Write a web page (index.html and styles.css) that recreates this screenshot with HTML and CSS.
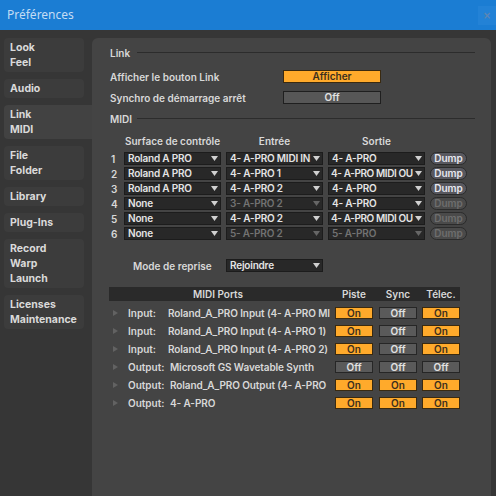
FILE: index.html
```html
<!DOCTYPE html>
<html>
<head>
<meta charset="utf-8">
<title>Préférences</title>
<link rel="stylesheet" href="styles.css">
</head>
<body>
<div class="titlebar"><span class="title">Préférences</span><span class="close">×</span></div>
<div class="main">
  <nav class="sidebar">
    <div class="tab">Look<br>Feel</div>
    <div class="tab">Audio</div>
    <div class="tab sel">Link<br>MIDI</div>
    <div class="tab">File<br>Folder</div>
    <div class="tab">Library</div>
    <div class="tab">Plug-Ins</div>
    <div class="tab">Record<br>Warp<br>Launch</div>
    <div class="tab">Licenses<br>Maintenance</div>
  </nav>
  <section class="panel">
    <div class="sec-head"><span class="sec-label">Link</span><span class="rule"></span></div>
    <div class="opt-row first"><span class="opt-label">Afficher le bouton Link</span><span class="wbtn on">Afficher</span></div>
    <div class="opt-row"><span class="opt-label">Synchro de démarrage arrêt</span><span class="wbtn off">Off</span></div>
    <div class="sec-head midi"><span class="sec-label">MIDI</span><span class="rule"></span></div>

    <div class="col-heads"><span class="num"></span><span class="ch">Surface de contrôle</span><span class="ch">Entrée</span><span class="ch">Sortie</span></div>

    <div class="mgrid">
      <div class="mrow"><span class="num">1</span>
        <div class="dd"><span class="txt">Roland A PRO</span><svg class="arr" viewBox="0 0 7 5"><polygon points="0,0 7,0 3.5,5"/></svg></div>
        <div class="dd"><span class="txt">4- A-PRO MIDI IN</span><svg class="arr" viewBox="0 0 7 5"><polygon points="0,0 7,0 3.5,5"/></svg></div>
        <div class="dd"><span class="txt">4- A-PRO</span><svg class="arr" viewBox="0 0 7 5"><polygon points="0,0 7,0 3.5,5"/></svg></div>
        <span class="dump">Dump</span></div>
      <div class="mrow"><span class="num">2</span>
        <div class="dd"><span class="txt">Roland A PRO</span><svg class="arr" viewBox="0 0 7 5"><polygon points="0,0 7,0 3.5,5"/></svg></div>
        <div class="dd"><span class="txt">4- A-PRO 1</span><svg class="arr" viewBox="0 0 7 5"><polygon points="0,0 7,0 3.5,5"/></svg></div>
        <div class="dd tight"><span class="txt">4- A-PRO MIDI OU</span><svg class="arr" viewBox="0 0 7 5"><polygon points="0,0 7,0 3.5,5"/></svg></div>
        <span class="dump">Dump</span></div>
      <div class="mrow"><span class="num">3</span>
        <div class="dd"><span class="txt">Roland A PRO</span><svg class="arr" viewBox="0 0 7 5"><polygon points="0,0 7,0 3.5,5"/></svg></div>
        <div class="dd"><span class="txt">4- A-PRO 2</span><svg class="arr" viewBox="0 0 7 5"><polygon points="0,0 7,0 3.5,5"/></svg></div>
        <div class="dd"><span class="txt">4- A-PRO</span><svg class="arr" viewBox="0 0 7 5"><polygon points="0,0 7,0 3.5,5"/></svg></div>
        <span class="dump">Dump</span></div>
      <div class="mrow"><span class="num">4</span>
        <div class="dd"><span class="txt">None</span><svg class="arr" viewBox="0 0 7 5"><polygon points="0,0 7,0 3.5,5"/></svg></div>
        <div class="dd dis"><span class="txt">3- A-PRO 2</span><svg class="arr" viewBox="0 0 7 5"><polygon points="0,0 7,0 3.5,5"/></svg></div>
        <div class="dd"><span class="txt">4- A-PRO</span><svg class="arr" viewBox="0 0 7 5"><polygon points="0,0 7,0 3.5,5"/></svg></div>
        <span class="dump dis">Dump</span></div>
      <div class="mrow"><span class="num">5</span>
        <div class="dd"><span class="txt">None</span><svg class="arr" viewBox="0 0 7 5"><polygon points="0,0 7,0 3.5,5"/></svg></div>
        <div class="dd"><span class="txt">4- A-PRO 2</span><svg class="arr" viewBox="0 0 7 5"><polygon points="0,0 7,0 3.5,5"/></svg></div>
        <div class="dd tight"><span class="txt">4- A-PRO MIDI OU</span><svg class="arr" viewBox="0 0 7 5"><polygon points="0,0 7,0 3.5,5"/></svg></div>
        <span class="dump dis">Dump</span></div>
      <div class="mrow"><span class="num">6</span>
        <div class="dd"><span class="txt">None</span><svg class="arr" viewBox="0 0 7 5"><polygon points="0,0 7,0 3.5,5"/></svg></div>
        <div class="dd dis"><span class="txt">5- A-PRO 2</span><svg class="arr" viewBox="0 0 7 5"><polygon points="0,0 7,0 3.5,5"/></svg></div>
        <div class="dd dis"><span class="txt">5- A-PRO</span><svg class="arr" viewBox="0 0 7 5"><polygon points="0,0 7,0 3.5,5"/></svg></div>
        <span class="dump dis">Dump</span></div>
    </div>

    <div class="mode-row"><span class="mode-label">Mode de reprise</span>
      <div class="dd"><span class="txt">Rejoindre</span><svg class="arr" viewBox="0 0 7 5"><polygon points="0,0 7,0 3.5,5"/></svg></div></div>

    <div class="ports">
      <div class="th"><span class="th-name">MIDI Ports</span><span class="th-col">Piste</span><span class="th-col c2">Sync</span><span class="th-col c3">Télec.</span></div>
      <div class="prow"><span class="tri"></span><span class="plabel">Input:</span><span class="pname">Roland_A_PRO Input (4- A-PRO MI</span><span class="tg on">On</span><span class="tg off c2">Off</span><span class="tg on c3">On</span></div>
      <div class="prow"><span class="tri"></span><span class="plabel">Input:</span><span class="pname">Roland_A_PRO Input (4- A-PRO 1)</span><span class="tg on">On</span><span class="tg off c2">Off</span><span class="tg on c3">On</span></div>
      <div class="prow"><span class="tri"></span><span class="plabel">Input:</span><span class="pname">Roland_A_PRO Input (4- A-PRO 2)</span><span class="tg on">On</span><span class="tg off c2">Off</span><span class="tg on c3">On</span></div>
      <div class="prow"><span class="tri"></span><span class="plabel out">Output:</span><span class="pname out">Microsoft GS Wavetable Synth</span><span class="tg off">Off</span><span class="tg off c2">Off</span><span class="tg off c3">Off</span></div>
      <div class="prow"><span class="tri"></span><span class="plabel out">Output:</span><span class="pname out">Roland_A_PRO Output (4- A-PRO</span><span class="tg on">On</span><span class="tg on c2">On</span><span class="tg on c3">On</span></div>
      <div class="prow"><span class="tri"></span><span class="plabel out">Output:</span><span class="pname out">4- A-PRO</span><span class="tg on">On</span><span class="tg on c2">On</span><span class="tg on c3">On</span></div>
    </div>
  </section>
</div>
</body>
</html>
```
FILE: styles.css
```css
html, body {
  margin: 0;
  padding: 0;
}
body {
  width: 496px;
  height: 496px;
  overflow: hidden;
  background: #363636;
  font-family: Inter, "Noto Sans", "DejaVu Sans", sans-serif;
  font-size: 10px;
  font-weight: 600;
  color: #d8d8d8;
}

.titlebar {
  height: 30px;
  background: #1b7dd3;
  display: flex;
  justify-content: space-between;
  align-items: flex-start;
}
.title {
  margin: 7px 0 0 7px;
  font-family: "Noto Sans", sans-serif;
  font-weight: 400;
  font-size: 12px;
  line-height: 16px;
  color: #c3dcf4;
}
.close {
  margin-top: 6px;
  width: 18px;
  height: 19px;
  background: #2382d6;
  color: #5e86b3;
  font-family: "DejaVu Sans", sans-serif;
  font-size: 10px;
  line-height: 19px;
  text-align: center;
}

.main {
  display: flex;
  height: 466px;
}

.sidebar {
  width: 92px;
  flex: none;
  box-sizing: border-box;
  padding: 8px 0 0 4px;
  display: flex;
  flex-direction: column;
  gap: 7px;
}
.tab {
  width: 80px;
  box-sizing: border-box;
  padding: 2px 0 2px 6px;
  background: #3c3c3c;
  border-radius: 4px;
  line-height: 15px;
  font-size: 10.5px;
  font-weight: 700;
  color: #dadada;
}
.tab.sel {
  width: 88px;
  background: #424242;
  border-radius: 4px 0 0 4px;
}

.panel {
  flex: none;
  width: 399px;
  margin-top: 8px;
  box-sizing: border-box;
  padding: 8px 16px 0 18px;
  background: #444444;
  border-radius: 6px 6px 0 0;
}

.sec-head {
  display: flex;
  align-items: center;
  height: 14px;
  line-height: 14px;
}
.sec-head.midi {
  margin-top: 8px;
}
.sec-label {
  width: 27px;
  flex: none;
}
.rule {
  flex: 1;
  height: 1px;
  background: #2c2c2c;
  margin-top: -1px;
}

.opt-row {
  display: flex;
  align-items: center;
  height: 13px;
  margin-top: 8px;
}
.opt-row.first {
  margin-top: 10px;
}
.opt-label {
  width: 173px;
  flex: none;
}
.wbtn {
  width: 98px;
  height: 13px;
  box-sizing: border-box;
  text-align: center;
  line-height: 11px;
  border: 1px solid #222;
}
.wbtn.on {
  background: #ffaa2b;
  border-color: #3a2a10;
  color: #3b2f1e;
}
.wbtn.off {
  background: #575757;
  border-color: #1f1f1f;
  color: #e2e2e2;
}

.col-heads {
  display: flex;
  height: 14px;
  line-height: 14px;
  margin-top: 8px;
}
.num {
  width: 14px;
  flex: none;
}
.ch {
  width: 97px;
  margin-right: 5px;
  text-align: center;
  white-space: nowrap;
}

.mgrid {
  margin-top: 4px;
  display: flex;
  flex-direction: column;
  gap: 2px;
}
.mrow {
  display: flex;
  align-items: center;
  height: 13px;
}
.mrow .num {
  padding-left: 1px;
  box-sizing: border-box;
}
.dd {
  width: 97px;
  height: 13px;
  flex: none;
  margin-right: 5px;
  box-sizing: border-box;
  background: #282828;
  border: 1px solid #1c1c1c;
  display: flex;
  align-items: center;
  padding: 0 2px 0 3px;
  color: #e4e4e4;
  line-height: 11px;
  letter-spacing: -0.2px;
}
.dd.tight {
  padding-left: 2px;
  letter-spacing: -0.4px;
}
.dd .txt {
  flex: 1;
  overflow: hidden;
  white-space: nowrap;
}
.arr {
  width: 7px;
  height: 5px;
  flex: none;
  fill: #d0d0d0;
}
.dd.dis .txt {
  color: #727272;
}
.dd.dis .arr {
  fill: #666666;
}
.dump {
  width: 37px;
  height: 13px;
  box-sizing: border-box;
  border-radius: 7px;
  border: 1px solid #2b2b2b;
  background: #58585f;
  color: #e8e8f0;
  text-align: center;
  line-height: 11px;
}
.dump.dis {
  background: #4a4a4a;
  color: #6e6e6e;
}

.mode-row {
  display: flex;
  align-items: center;
  height: 13px;
  margin-top: 19px;
}
.mode-label {
  width: 93px;
  margin-left: 23px;
  flex: none;
}

.ports {
  margin-top: 15px;
  margin-left: -1px;
  width: 351px;
}
.th {
  display: flex;
  align-items: center;
  height: 14px;
  line-height: 14px;
  background: #2a2a2a;
}
.th-name {
  width: 218px;
  margin-right: 8px;
  text-align: center;
}
.th-col {
  width: 38px;
  text-align: center;
}
.c2 {
  margin-left: 6px;
}
.c3 {
  margin-left: 5px;
}
.prow {
  display: flex;
  align-items: center;
  height: 12px;
  margin-top: 6px;
}
.tri {
  width: 0;
  height: 0;
  margin-left: 4px;
  border-left: 5px solid #626262;
  border-top: 3.5px solid transparent;
  border-bottom: 3.5px solid transparent;
}
.plabel {
  margin-left: 10px;
  width: 40px;
  flex: none;
}
.plabel.out {
  width: 42px;
}
.pname {
  width: 164px;
  margin-right: 3px;
  flex: none;
  overflow: hidden;
  white-space: nowrap;
  letter-spacing: -0.1px;
}
.pname.out {
  width: 162px;
}
.tg {
  width: 38px;
  height: 12px;
  flex: none;
  box-sizing: border-box;
  text-align: center;
  line-height: 10px;
  border: 1px solid #262626;
}
.tg.on {
  background: #ffaa2b;
  border-color: #3a2a10;
  color: #3b2f1e;
}
.tg.off {
  background: #5a5a5a;
  border-color: #262626;
  color: #e2e2e2;
}
```
